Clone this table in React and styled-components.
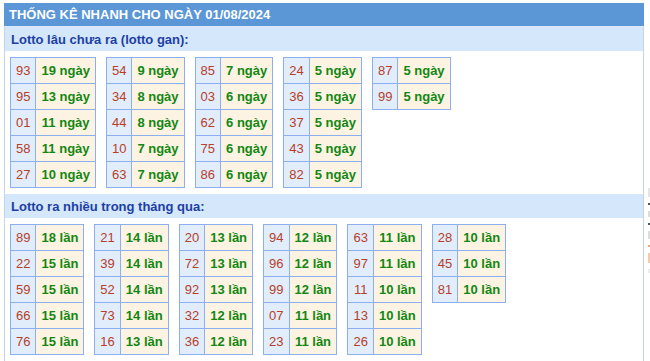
import styled, { createGlobalStyle } from 'styled-components';

const GlobalStyle = createGlobalStyle`
  body {
    margin: 0;
    background: #fff;
    font-family: 'Liberation Sans', Arial, sans-serif;
  }
`;

const Page = styled.div`
  display: flex;
  align-items: flex-start;
  gap: 4px;
  padding: 3px 0 0 4px;
  width: 700px;
`;

const Panel = styled.div`
  width: 640px;
  flex-shrink: 0;
`;

const Header = styled.div`
  height: 23px;
  padding-left: 5px;
  display: flex;
  align-items: center;
  background: #5b96d6;
  border-bottom: 1px solid #dce8f6;
  color: #fff;
  font-size: 13px;
  font-weight: bold;
`;

const Body = styled.div`
  border-left: 1px solid #c6d3e3;
  border-right: 1px solid #c6d3e3;
  padding-bottom: 30px;
`;

const SectionTitle = styled.div`
  height: 24px;
  padding-left: 6px;
  display: flex;
  align-items: center;
  background: #d4e7fb;
  color: #1d3fa3;
  font-size: 13px;
  font-weight: bold;
`;

const TableRow = styled.div`
  display: flex;
  align-items: flex-start;
  gap: 10px;
  padding: 6px 5px;
`;

const Table = styled.table`
  border-collapse: collapse;
  font-size: 13px;
`;

const Cell = styled.td`
  height: 25px;
  padding: 0 5px;
  border: 1px solid #8cb0ef;
  text-align: center;
  white-space: nowrap;
  background: ${(p) => (p.$num ? '#e2edfc' : '#fdf3e2')};
  color: ${(p) => (p.$num ? '#b5402a' : '#138713')};
  font-weight: ${(p) => (p.$num ? 'normal' : 'bold')};
`;

const Sidebar = styled.div`
  display: flex;
  flex-direction: column;
  gap: 6px;
  margin-top: 185px;
`;

const SideItem = styled.div`
  width: ${(p) => p.$w}px;
  height: ${(p) => p.$h}px;
  background: ${(p) => p.$c};
`;

const gan = [
  [['93', 19], ['95', 13], ['01', 11], ['58', 11], ['27', 10]],
  [['54', 9], ['34', 8], ['44', 8], ['10', 7], ['63', 7]],
  [['85', 7], ['03', 6], ['62', 6], ['75', 6], ['86', 6]],
  [['24', 5], ['36', 5], ['37', 5], ['43', 5], ['82', 5]],
  [['87', 5], ['99', 5]],
];

const nhieu = [
  [['89', 18], ['22', 15], ['59', 15], ['66', 15], ['76', 15]],
  [['21', 14], ['39', 14], ['52', 14], ['73', 14], ['16', 13]],
  [['20', 13], ['72', 13], ['92', 13], ['32', 12], ['36', 12]],
  [['94', 12], ['96', 12], ['99', 12], ['07', 11], ['23', 11]],
  [['63', 11], ['97', 11], ['11', 10], ['13', 10], ['26', 10]],
  [['28', 10], ['45', 10], ['81', 10]],
];

const sideBits = [
  { w: 3, h: 9, c: '#e4e4e4' },
  { w: 3, h: 2, c: '#555' },
  { w: 3, h: 6, c: '#dcdcdc' },
  { w: 3, h: 2, c: '#555' },
  { w: 3, h: 8, c: '#dcdcdc' },
  { w: 3, h: 2, c: '#f5a46a' },
  { w: 3, h: 10, c: '#f8c9a2' },
  { w: 3, h: 4, c: '#ececec' },
];

const StatTables = ({ groups, unit }) => (
  <TableRow>
    {groups.map((rows, i) => (
      <Table key={i}>
        <tbody>
          {rows.map(([num, count]) => (
            <tr key={num}>
              <Cell $num>{num}</Cell>
              <Cell>
                {count} {unit}
              </Cell>
            </tr>
          ))}
        </tbody>
      </Table>
    ))}
  </TableRow>
);

export default function App() {
  return (
    <>
      <GlobalStyle />
      <Page>
        <Panel>
          <Header>THỐNG KÊ NHANH CHO NGÀY 01/08/2024</Header>
          <Body>
            <SectionTitle>Lotto lâu chưa ra (lotto gan):</SectionTitle>
            <StatTables groups={gan} unit="ngày" />
            <SectionTitle>Lotto ra nhiều trong tháng qua:</SectionTitle>
            <StatTables groups={nhieu} unit="lần" />
          </Body>
        </Panel>
        <Sidebar>
          {sideBits.map((b, i) => (
            <SideItem key={i} $w={b.w} $h={b.h} $c={b.c} />
          ))}
        </Sidebar>
      </Page>
    </>
  );
}
